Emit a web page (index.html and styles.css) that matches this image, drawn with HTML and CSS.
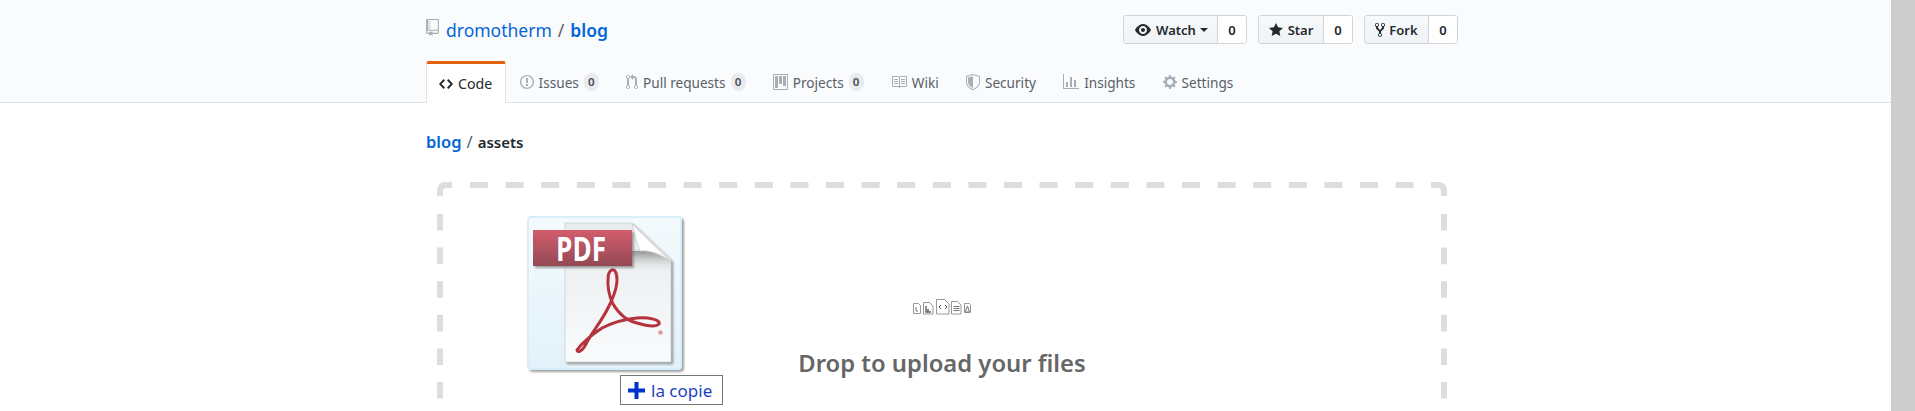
FILE: index.html
```html
<!DOCTYPE html>
<html lang="en">
<head>
  <meta charset="utf-8">
  <title>blog/assets</title>
  <link rel="stylesheet" href="styles.css">
</head>
<body>
<div class="page">
  <div class="main">
    <div class="repohead">
      <div class="wrap">
        <div class="headrow">
          <h1 class="repotitle">
            <svg class="repoicon" viewBox="0 0 12 16" width="13" height="17"><path d="M4 9H3V8h1v1zm0-3H3v1h1V6zm0-2H3v1h1V4zm0-2H3v1h1V2zm8-1v12c0 .55-.45 1-1 1H6v2l-1.5-1.5L3 16v-2H1c-.55 0-1-.45-1-1V1c0-.55.45-1 1-1h10c.55 0 1 .45 1 1zm-1 10H1v2h2v-1h3v1h5v-2zm0-10H2v9h9V1z"/></svg>
            <a href="#" class="owner">dromotherm</a><span class="slash">/</span><a href="#" class="reponame">blog</a>
          </h1>
          <div class="actions">
            <div class="btngroup">
              <span class="btn btn-watch"><svg viewBox="0 0 16 16" width="16" height="16"><path d="M8.06 2C3 2 0 8 0 8s3 6 8.06 6C13 14 16 8 16 8s-3-6-7.94-6zM8 12c-2.2 0-4-1.78-4-4 0-2.2 1.8-4 4-4 2.22 0 4 1.8 4 4 0 2.22-1.78 4-4 4zm2-4c0 1.11-.89 2-2 2-1.11 0-2-.89-2-2 0-1.11.89-2 2-2 1.11 0 2 .89 2 2z"/></svg>Watch<i class="caret"></i></span>
              <span class="count">0</span>
            </div>
            <div class="btngroup">
              <span class="btn btn-star"><svg viewBox="0 0 14 16" width="14" height="16"><path d="M14 6l-4.9-.64L7 1 4.9 5.36 0 6l3.6 3.26L2.67 14 7 11.67 11.33 14l-.93-4.74L14 6z"/></svg>Star</span>
              <span class="count">0</span>
            </div>
            <div class="btngroup">
              <span class="btn btn-fork"><svg viewBox="0 0 10 16" width="10" height="16"><path d="M8 1a1.993 1.993 0 0 0-1 3.72V6L5 8 3 6V4.72A1.993 1.993 0 0 0 2 1a1.993 1.993 0 0 0-1 3.72V6.5l3 3v1.78A1.993 1.993 0 0 0 5 15a1.993 1.993 0 0 0 1-3.72V9.5l3-3V4.72A1.993 1.993 0 0 0 8 1zM2 4.2C1.34 4.2.8 3.65.8 3c0-.65.55-1.2 1.2-1.2.65 0 1.2.55 1.2 1.2 0 .65-.55 1.2-1.2 1.2zm3 10c-.66 0-1.2-.55-1.2-1.2 0-.65.55-1.2 1.2-1.2.65 0 1.2.55 1.2 1.2 0 .65-.55 1.2-1.2 1.2zm3-10c-.66 0-1.2-.55-1.2-1.2 0-.65.55-1.2 1.2-1.2.65 0 1.2.55 1.2 1.2 0 .65-.55 1.2-1.2 1.2z"/></svg>Fork</span>
              <span class="count">0</span>
            </div>
          </div>
        </div>
        <nav class="tabs">
          <a href="#" class="tab on"><svg viewBox="0 0 14 16" width="14" height="16"><path d="M9.5 3L8 4.5 11.5 8 8 11.5 9.5 13 14 8 9.5 3zm-5 0L0 8l4.5 5L6 11.5 2.5 8 6 4.5 4.5 3z"/></svg>Code</a>
          <a href="#" class="tab"><svg viewBox="0 0 14 16" width="14" height="16"><path d="M7 2.3c3.14 0 5.7 2.56 5.7 5.7s-2.56 5.7-5.7 5.7A5.71 5.71 0 0 1 1.3 8c0-3.14 2.56-5.7 5.7-5.7zM7 1C3.14 1 0 4.14 0 8s3.14 7 7 7 7-3.14 7-7-3.14-7-7-7zm1 3H6v5h2V4zm0 6H6v2h2v-2z"/></svg>Issues<span class="badge">0</span></a>
          <a href="#" class="tab"><svg viewBox="0 0 12 16" width="12" height="16"><path d="M11 11.28V5c-.03-.78-.34-1.47-.94-2.06C9.46 2.35 8.78 2.03 8 2H7V0L4 3l3 3V4h1c.27.02.48.11.69.31.21.2.3.42.31.69v6.28A1.993 1.993 0 0 0 10 15a1.993 1.993 0 0 0 1-3.72zm-1 2.92c-.66 0-1.2-.55-1.2-1.2 0-.65.55-1.2 1.2-1.2.65 0 1.2.55 1.2 1.2 0 .65-.55 1.2-1.2 1.2zM4 3c0-1.11-.89-2-2-2a1.993 1.993 0 0 0-1 3.72v6.56A1.993 1.993 0 0 0 2 15a1.993 1.993 0 0 0 1-3.72V4.72c.59-.34 1-.98 1-1.72zm-.8 10c0 .66-.55 1.2-1.2 1.2-.65 0-1.2-.55-1.2-1.2 0-.65.55-1.2 1.2-1.2.65 0 1.2.55 1.2 1.2zM2 4.2C1.34 4.2.8 3.65.8 3c0-.65.55-1.2 1.2-1.2.65 0 1.2.55 1.2 1.2 0 .65-.55 1.2-1.2 1.2z"/></svg>Pull requests<span class="badge">0</span></a>
          <a href="#" class="tab"><svg viewBox="0 0 15 16" width="15" height="16"><path fill-rule="evenodd" d="M14 0H1a1 1 0 0 0-1 1v14a1 1 0 0 0 1 1h13a1 1 0 0 0 1-1V1a1 1 0 0 0-1-1zM1 1h13v14H1z"/><path d="M2 2h3v12H2zM6 2h3v8H6zM10 2h3v10h-3z"/></svg>Projects<span class="badge">0</span></a>
          <a href="#" class="tab"><svg viewBox="0 0 16 16" width="16" height="16"><path d="M3 5h4v1H3V5zm0 3h4V7H3v1zm0 2h4V9H3v1zm11-5h-4v1h4V5zm0 2h-4v1h4V7zm0 2h-4v1h4V9zm2-6v9c0 .55-.45 1-1 1H9.5l-1 1-1-1H2c-.55 0-1-.45-1-1V3c0-.55.45-1 1-1h5.5l1 1 1-1H15c.55 0 1 .45 1 1zm-8 .5L7.5 3H2v9h6V3.5zm7-.5H9.5l-.5.5V12h6V3z"/></svg>Wiki</a>
          <a href="#" class="tab"><svg viewBox="0 0 14 16" width="14" height="16"><path fill-rule="evenodd" d="M7 0L0 2v6.02C0 12.69 5.31 16 7 16c1.69 0 7-3.31 7-7.98V2L7 0zM7 1.05L13 2.75v5.27c0 3.9-4.6 6.98-6 6.98s-6-3.08-6-6.98V2.75L7 1.05z"/><path d="M7 2.2L2 3.6v4.4c0 3 3.7 5.7 5 5.800V2.200z"/></svg>Security</a>
          <a href="#" class="tab"><svg viewBox="0 0 16 16" width="16" height="16"><path d="M16 14v1H0V0h1v14h15zM5 13H3V8h2v5zm4 0H7V3h2v10zm4 0h-2V6h2v7z"/></svg>Insights</a>
          <a href="#" class="tab"><svg viewBox="0 0 14 16" width="14" height="16"><path d="M14 8.77v-1.6l-1.94-.64-.45-1.09.88-1.84-1.13-1.13-1.81.91-1.09-.45-.69-1.92h-1.6l-.63 1.94-1.11.45-1.84-.88-1.13 1.13.91 1.81-.45 1.09L0 7.23v1.59l1.94.64.45 1.09-.88 1.84 1.13 1.13 1.81-.91 1.09.45.69 1.92h1.59l.63-1.94 1.11-.45 1.84.88 1.13-1.13-.92-1.81.47-1.09L14 8.75v.02zM7 11c-1.66 0-3-1.34-3-3s1.34-3 3-3 3 1.34 3 3-1.34 3-3 3z"/></svg>Settings</a>
        </nav>
      </div>
    </div>

    <div class="wrap">
      <div class="crumb"><a href="#">blog</a><span class="slash">/</span><strong>assets</strong></div>

      <div class="dropbox">
        <svg class="dashes" width="1010" height="229" viewBox="0 0 1010 229" fill="none">
          <path d="M3 14V9Q3 3 9 3H15"/>
          <path d="M994 3H1001Q1007 3 1007 9V14"/>
          <path d="M33 3H977" stroke-dasharray="18 17.6"/>
          <path d="M3 32V229" stroke-dasharray="16.6 17"/>
          <path d="M1007 32V229" stroke-dasharray="16.6 17"/>
        </svg>

        <svg class="filetypes" width="58" height="16" viewBox="0 0 58 16" fill="#fff" stroke="#999">
          <path d="M.5 4.500h5l2 2v8h-7z"/><path d="M3 8v4h2" stroke="#777"/>
          <path d="M10.500 3.500h6l3.500 3.500v8h-9.500z"/><path d="M13 7v6h5M15 13v-3" stroke="#666" stroke-width="1.500"/>
          <path d="M23.500.5h8l4.500 4.500v10h-12.500z"/><path d="M28 6l-2 2 2 2M32 6l2 2-2 2" stroke="#555"/>
          <path d="M38.500 2.500h6l3.500 3.500v9h-9.500z"/><path d="M40.500 7.500h6M40.500 9.500h6M40.500 11.500h6" stroke="#777"/>
          <path d="M51.500 4.500h5l1 1v8h-6z"/><path d="M52 13l2.500-6 2 6z" stroke="#777" fill="none"/>
        </svg>
        <h2 class="droptitle">Drop to upload your files</h2>

        <div class="dragged">
          <svg class="pdficon" width="160" height="160" viewBox="0 0 160 160">
            <defs>
              <linearGradient id="frame" x1="0" y1="0" x2="0" y2="1"><stop offset="0" stop-color="#f4fafd"/><stop offset="1" stop-color="#e2f2fa"/></linearGradient>
              <linearGradient id="sheet" x1="0" y1="0" x2="0" y2="1"><stop offset="0" stop-color="#e8ebec"/><stop offset="1" stop-color="#f9fbfc"/></linearGradient>
              <linearGradient id="band" x1="0" y1="0" x2="0" y2="1"><stop offset="0" stop-color="#d25c6c"/><stop offset="1" stop-color="#934a55"/></linearGradient>
              <linearGradient id="curl" x1="0" y1="0" x2="0" y2="1"><stop offset="0" stop-color="#8f8f8f"/><stop offset="1" stop-color="#e8ebec" stop-opacity="0"/></linearGradient>
              <filter id="soft" x="-10%" y="-10%" width="125%" height="125%"><feDropShadow dx="2" dy="2" stdDeviation="1.2" flood-color="#777" flood-opacity=".7"/></filter>
            </defs>
            <rect x="1" y="1" width="153" height="152" rx="3" fill="url(#frame)" stroke="#d8eefa" stroke-width="2" filter="url(#soft)"/>
            <path d="M38 7H105L144 44V146H38z" fill="url(#sheet)" stroke="#c2c6c8" stroke-width=".6" filter="url(#soft)"/>
            <path d="M105 35Q126 33 144 45V56H105z" fill="url(#curl)"/>
            <path d="M105 8L142 44Q126 33 113 35Q108 22 105 8z" fill="#fff" stroke="#c9cccd" stroke-width=".8"/>
            <rect x="6" y="14" width="99" height="36" fill="url(#band)" filter="url(#soft)"/>
            <text x="54" y="45" class="pdftext" textLength="50" lengthAdjust="spacingAndGlyphs" text-anchor="middle">PDF</text>
            <path d="M81.300 59C80 70 82 80 86 88C92 98 100 105 110 107C120 110 129 111 132 108C134 104 122 101 110 102C98 103 85 107 75 112C66 118 55 127 50 134C50 137 55 136 59 128C65 116 75 105 82 90C88 78 92 66 89 57C87 52 83 53 81.300 59z" fill="none" stroke="#b5333d" stroke-width="3"/>
            <circle cx="133.500" cy="116.500" r="2.300" fill="#dc9aa0"/>
          </svg>
          <div class="copytag">
            <svg viewBox="0 0 17 17" width="17" height="17"><path d="M6.500 0h4v6.500H17v4h-6.500V17h-4v-6.500H0v-4h6.500z"/></svg>la copie
          </div>
        </div>
      </div>
    </div>
  </div>
  <div class="scrollbar"></div>
</div>
</body>
</html>
```

FILE: styles.css
```css
html,body{margin:0;padding:0;height:100%;overflow:hidden;background:#fff;}
body{font-family:"Noto Sans","Open Sans","Liberation Sans",sans-serif;font-size:14px;color:#24292e;}
h1,h2{margin:0;font-weight:normal;}
a{text-decoration:none;color:#0366d6;}
svg{display:block;flex:none;}

.page{display:flex;height:411px;overflow:hidden;}
.main{flex:1;min-width:0;}
.scrollbar{width:24px;background:#cdcdcd;}
.wrap{width:1032px;margin-left:426px;}

/* repo head */
.repohead{height:102px;background:#fafbfc;border-bottom:1px solid #e1e4e8;}
.headrow{display:flex;justify-content:space-between;align-items:center;padding-top:15px;height:29px;}
.repotitle{display:flex;align-items:center;font-size:17.5px;line-height:28px;}
.repoicon{fill:#a3aab1;margin:-4px 7px 0 0;}
.slash{color:#586069;margin:0 6px;}
.reponame{font-weight:600;}

.actions{display:flex;gap:11px;}
.btngroup{display:flex;height:29px;box-sizing:border-box;border:1px solid #d1d5da;border-radius:3px;overflow:hidden;font-size:13px;font-weight:600;}
.btn{display:flex;align-items:center;justify-content:center;background:linear-gradient(#f7f9fa,#eff3f6);border-right:1px solid #d1d5da;box-sizing:border-box;}
.btn svg{fill:#24292e;}
.btn-watch{width:94px;gap:5px;padding-left:2px;}
.btn-star{width:65px;gap:5px;}
.btn-fork{width:64px;gap:4px;}
.count{display:flex;align-items:center;justify-content:center;width:28px;background:#fff;font-weight:600;}
.caret{width:0;height:0;border:4px solid transparent;border-top-color:#24292e;border-bottom:0;margin-left:-1px;}

/* tabs */
.tabs{display:flex;margin-top:17px;}
.tab{display:flex;align-items:center;height:40px;padding:1px 13.6px 0;color:#586069;font-size:13.6px;}
.tab svg{fill:#a8aeb5;margin-right:5px;}
.tab.on{color:#24292e;background:#fff;box-sizing:border-box;height:42px;padding:0 12px;width:80px;font-size:14.2px;border:1px solid #e1e4e8;border-top:3px solid #e36209;border-bottom:0;border-radius:3px 3px 0 0;}
.tab.on svg{fill:#24292e;}
.badge{display:inline-block;min-width:15px;height:18px;line-height:18px;margin-left:5px;border-radius:9px;background:#e9ebee;text-align:center;font-size:11.5px;font-weight:600;color:#444d56;}

/* breadcrumb */
.crumb{height:24px;line-height:24px;margin-top:27px;font-size:16.5px;font-weight:600;}
.crumb .slash{font-weight:normal;margin:0 5px;}
.crumb strong{font-weight:600;font-size:15px;}

/* upload zone */
.dropbox{position:relative;width:1010px;height:229px;margin:28px 0 0 11px;box-sizing:border-box;padding-top:117px;}
.dashes{position:absolute;left:0;top:0;stroke:#ddd;stroke-width:6;}
.filetypes{margin:0 auto;stroke-width:1;}
.droptitle{margin-top:33px;text-align:center;font-size:23.8px;line-height:30px;font-weight:600;color:#666;}

.dragged{position:absolute;left:90px;top:34px;width:200px;}
.pdftext{font-family:"Open Sans","Liberation Sans",sans-serif;font-weight:700;font-size:34px;fill:#fff;}
.copytag{position:absolute;left:93px;top:159px;display:flex;align-items:center;gap:6px;box-sizing:border-box;width:103px;height:30px;padding-left:7px;background:#fff;border:1px solid #777;font-size:17px;color:#1c3fc0;}
.copytag svg{fill:#0033cc;}
```
